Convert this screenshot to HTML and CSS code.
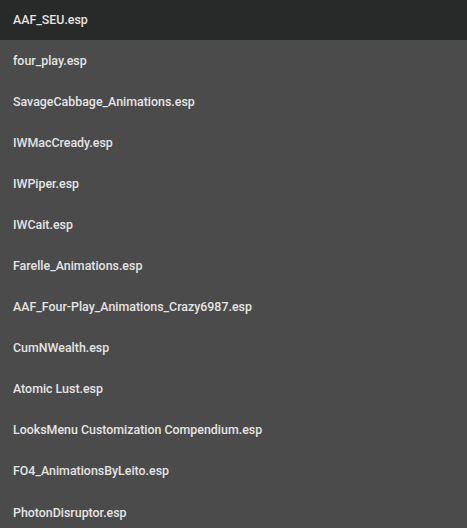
FILE: index.html
```html
<!DOCTYPE html>
<html>
<head>
<meta charset="utf-8">
<link rel="stylesheet" href="styles.css">
</head>
<body>
<ul class="list">
  <li class="item active">AAF_SEU.esp</li>
  <li class="item">four_play.esp</li>
  <li class="item">SavageCabbage_Animations.esp</li>
  <li class="item">IWMacCready.esp</li>
  <li class="item">IWPiper.esp</li>
  <li class="item">IWCait.esp</li>
  <li class="item">Farelle_Animations.esp</li>
  <li class="item">AAF_Four-Play_Animations_Crazy6987.esp</li>
  <li class="item">CumNWealth.esp</li>
  <li class="item">Atomic Lust.esp</li>
  <li class="item">LooksMenu Customization Compendium.esp</li>
  <li class="item">FO4_AnimationsByLeito.esp</li>
  <li class="item">PhotonDisruptor.esp</li>
</ul>
</body>
</html>
```
FILE: styles.css
```css
html, body {
  margin: 0;
  padding: 0;
  background: #4b4b4b;
  height: 100%;
  overflow: hidden;
}
.list {
  list-style: none;
  margin: 0;
  padding: 0;
  font-family: Roboto, "Liberation Sans", sans-serif;
  font-size: 12.4px;
  font-weight: 500;
  color: #e4e4e4;
}
.item {
  height: 41.1px;
  display: flex;
  align-items: center;
  padding-left: 13px;
  box-sizing: border-box;
  padding-bottom: 1px;
}
.item.active {
  height: 40px;
  background: #282a2a;
}
```
